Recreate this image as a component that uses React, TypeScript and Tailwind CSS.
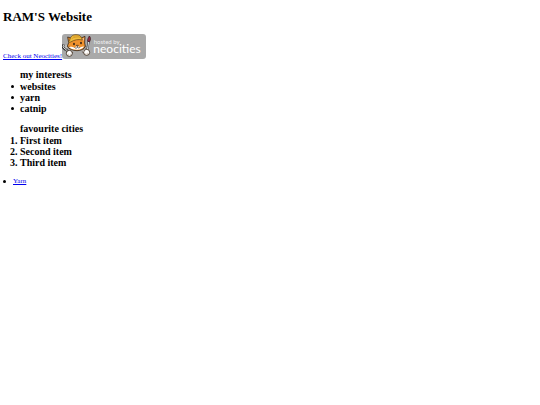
import React from "react";

const interests = ["websites", "yarn", "catnip"];
const cities = ["First item", "Second item", "Third item"];

const linkCls = "text-[#0000ee] underline";

export default function App() {
  return (
    <main className="min-h-screen bg-white px-[3px] pt-[9px] font-['Liberation_Serif',serif] text-[7px] leading-2 text-black">
      <h1 className="text-[13px] leading-4 font-bold">RAM'S Website</h1>

      <div className="mt-[9px] flex items-end">
        <a href="https://neocities.org" className={`${linkCls} -mb-px`}>Check out Neocities!</a>
        <NeocitiesBadge />
      </div>

      <section className="mt-2.5 pl-[17px] text-[10px] leading-[11px] font-bold">
        <h2>my interests</h2>
        <ul className="mt-px -ml-[9px]">
          {interests.map((item) => (
            <li
              key={item}
              className="flex items-center gap-1.5 before:size-[3px] before:rounded-full before:bg-black"
            >
              {item}
            </li>
          ))}
        </ul>
      </section>

      <section className="mt-[9px] pl-[17px] text-[10px] leading-[11px] font-bold">
        <h2>favourite cities</h2>
        <ol className="mt-px list-decimal">
          {cities.map((item) => (
            <li key={item}>{item}</li>
          ))}
        </ol>
      </section>

      <ul className="mt-[9px]">
        <li className="flex items-center gap-[7px] before:size-[3px] before:rounded-full before:bg-black">
          <a href="#yarn" className={linkCls}>Yarn</a>
        </li>
      </ul>
    </main>
  );
}

function NeocitiesBadge() {
  return (
    <svg viewBox="0 0 252 75" className="h-[25px] w-[84px]" role="img" aria-label="hosted by neocities">
      <rect width="252" height="75" rx="9" fill="#a9a9a9" />

      {/* wrench */}
      <path d="M5 31l-3 8 7 7 4 1 7 10" fill="none" stroke="#333" strokeWidth="7" strokeLinejoin="round" />
      <path d="M5 32l-2 7 6 6 4 2 7 10M12 33l1 10" fill="none" stroke="#d5d5d5" strokeWidth="3" />

      {/* arms */}
      <path d="M30 52l-6 8M62 50l8 6" stroke="#3b2a1c" strokeWidth="9" />
      <path d="M30 52l-6 8M62 50l8 6" stroke="#fff" strokeWidth="5" />

      {/* head */}
      <path d="M20 26l-3-17 12 4 24 1 16-7-1 20 2 10c-5 9-13 13-25 13s-23-4-29-13z" fill="#f0922e" stroke="#3b2a1c" strokeWidth="2.5" strokeLinejoin="round" />
      <path d="M19 38l10 0 9 3 7-6 9 5 13-3c-4 7-12 10-22 10s-20-3-26-9z" fill="#fff" />
      <path d="M60 15l6-4-1 9z" fill="#f8c9a0" />

      {/* cap */}
      <path d="M23 20C24 8 32 2 42 2s17 5 19 16c-12-3-23-1-35 6-6 3-9 0-3-4z" fill="#f0bd3c" stroke="#5d4114" strokeWidth="2" />
      <path d="M29 14c7-5 18-7 29-3M34 7c7-2 13-2 17 0" fill="none" stroke="#c98d22" strokeWidth="2" />

      {/* face */}
      <ellipse cx="36" cy="30" rx="2.5" ry="4" fill="#241a14" />
      <ellipse cx="57" cy="27" rx="2.5" ry="4" fill="#241a14" />
      <path d="M43 34h6l-3 4zM46 38v2c-3 4-7 3-8 0M46 40c3 3 7 2 9-1" fill="none" stroke="#3b2a1c" strokeWidth="2" />
      <path d="M24 37l-9 1M25 42l-8 3M65 37l9 0M65 41l8 3" stroke="#3b2a1c" strokeWidth="1" />

      {/* paint brush */}
      <path d="M80 22l-5 31" stroke="#333" strokeWidth="6" strokeLinecap="round" />
      <path d="M80 23l-4 27" stroke="#dfe4e6" strokeWidth="3" />
      <path d="M82 6c5 5 4 11 1 17l-6-1c-1-7 2-11 5-16z" fill="#962e42" stroke="#30171d" strokeWidth="2" />

      {/* paws */}
      <circle cx="22" cy="58" r="9" fill="#fff" stroke="#3b2a1c" strokeWidth="2.5" />
      <circle cx="74" cy="55" r="9" fill="#fff" stroke="#3b2a1c" strokeWidth="2.5" />
      <path d="M19 59v5M25 59v5M72 57v5M77 56v5" stroke="#b99b7d" strokeWidth="1.5" />

      <g fill="#fff" fontFamily="Lato, sans-serif">
        <text x="95" y="29" fontSize="18" fillOpacity="0.85">hosted by</text>
        <text x="94" y="58" fontSize="36">neocities</text>
      </g>
    </svg>
  );
}
